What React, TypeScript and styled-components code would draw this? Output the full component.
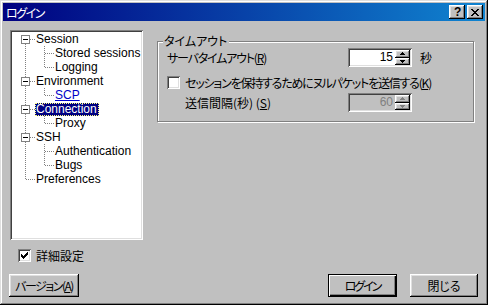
import React from "react";
import styled, { createGlobalStyle, css } from "styled-components";

const GlobalStyle = createGlobalStyle`
  html, body {
    margin: 0;
    padding: 0;
    background: #c0c0c0;
  }
  body {
    font-family: "Liberation Sans", "Noto Sans CJK JP", sans-serif;
    font-size: 12px;
    color: #000;
  }
`;

const jp = (ls = -1.2) => css`
  font-family: "Noto Sans CJK JP", "Liberation Sans", sans-serif;
  font-size: 12px;
  font-feature-settings: "palt";
  letter-spacing: ${ls}px;
`;

const raised = css`
  box-shadow: inset -1px -1px 0 #000, inset 1px 1px 0 #fff,
    inset -2px -2px 0 #808080, inset 2px 2px 0 #dfdfdf;
`;

const sunken = css`
  box-shadow: inset 1px 1px 0 #808080, inset -1px -1px 0 #fff,
    inset 2px 2px 0 #404040, inset -2px -2px 0 #dfdfdf;
`;

const Window = styled.div`
  width: 488px;
  height: 305px;
  box-sizing: border-box;
  padding: 3px;
  background: #c0c0c0;
  display: flex;
  flex-direction: column;
  box-shadow: inset -1px -1px 0 #000, inset 1px 1px 0 #dfdfdf,
    inset -2px -2px 0 #808080, inset 2px 2px 0 #fff;
`;

const TitleBar = styled.div`
  height: 18px;
  flex: none;
  display: flex;
  align-items: center;
  padding: 0 2px 0 3px;
  background: linear-gradient(to right, #000080, #1084d0);
  color: #fff;
  ${jp(-1.5)};
`;

const TitleButtons = styled.div`
  margin-left: auto;
  display: flex;
  gap: 2px;
`;

const TitleButton = styled.div`
  width: 16px;
  height: 14px;
  background: #c0c0c0;
  color: #000;
  display: flex;
  align-items: center;
  justify-content: center;
  font-family: "Liberation Sans", sans-serif;
  font-weight: bold;
  font-size: 12px;
  line-height: 14px;
  ${raised};
`;

const Content = styled.div`
  flex: 1;
  display: flex;
  flex-direction: column;
  padding: 9px 7px 5px 7px;
`;

const TopRow = styled.div`
  display: flex;
  gap: 14px;
  height: 210px;
`;

const Tree = styled.div`
  width: 133px;
  height: 210px;
  box-sizing: border-box;
  padding: 2px 2px 2px 6px;
  background: #fff;
  ${sunken};
`;

const TreeRow = styled.div`
  display: flex;
  align-items: center;
  height: 14px;
`;

const GutterSvg = styled.svg`
  flex: none;
  display: block;
`;

const NodeLabel = styled.span<{ $selected?: boolean; $hot?: boolean }>`
  height: 13px;
  line-height: 13px;
  padding: 0 2px 0 1px;
  white-space: nowrap;
  color: ${(p) => (p.$hot ? "#0000c8" : "#000")};
  text-decoration: ${(p) => (p.$hot ? "underline" : "none")};
  ${(p) =>
    p.$selected &&
    css`
      background: #000080;
      color: #fff;
      outline: 1px dotted #ffff7f;
      outline-offset: -1px;
    `}
`;

const RightPanel = styled.div`
  flex: 1;
  padding-right: 4px;
`;

const Group = styled.div`
  position: relative;
  margin-top: 11px;
  border: 1px solid #808080;
  box-shadow: 1px 1px 0 #fff, inset 1px 1px 0 #fff;
  padding: 6px 8px 9px 9px;
  display: flex;
  flex-direction: column;
`;

const Legend = styled.span`
  position: absolute;
  top: -8px;
  left: 5px;
  padding: 0 2px 0 1px;
  background: #c0c0c0;
  line-height: 14px;
  ${jp(0)};
`;

const FieldRow = styled.div<{ $indent?: number; $gap?: number }>`
  display: flex;
  align-items: center;
  height: 19px;
  margin-top: ${(p) => p.$gap ?? 0}px;
  padding-left: ${(p) => p.$indent ?? 0}px;
`;

const FieldLabel = styled.span<{ $width: number; $ls?: number }>`
  width: ${(p) => p.$width}px;
  white-space: nowrap;
  ${(p) => jp(p.$ls)};
`;

const Unit = styled.span`
  margin-left: 8px;
  ${jp(0)};
`;

const CheckRow = styled.div<{ $gap?: number; $indent?: number }>`
  display: flex;
  align-items: center;
  gap: 5px;
  height: 13px;
  margin-top: ${(p) => p.$gap ?? 0}px;
  padding-left: ${(p) => p.$indent ?? 0}px;
`;

const CheckText = styled.span<{ $ls?: number }>`
  white-space: nowrap;
  line-height: 13px;
  ${(p) => jp(p.$ls)};
`;

const CheckBox = styled.div`
  width: 13px;
  height: 13px;
  box-sizing: border-box;
  flex: none;
  background: #fff;
  display: flex;
  align-items: center;
  justify-content: center;
  ${sunken};
`;

const Spin = styled.div<{ $disabled?: boolean }>`
  width: 64px;
  height: 19px;
  box-sizing: border-box;
  padding: 2px;
  display: flex;
  background: ${(p) => (p.$disabled ? "#c0c0c0" : "#fff")};
  ${sunken};
`;

const SpinValue = styled.span<{ $disabled?: boolean }>`
  flex: 1;
  text-align: right;
  padding-right: 2px;
  line-height: 15px;
  font-size: 12px;
  color: ${(p) => (p.$disabled ? "#808080" : "#000")};
`;

const SpinButtons = styled.div`
  width: 15px;
  display: flex;
  flex-direction: column;
`;

const SpinButton = styled.div`
  flex: 1;
  background: #c0c0c0;
  display: flex;
  align-items: center;
  justify-content: center;
  ${raised};
`;

const Underline = styled.span`
  text-decoration: underline;
`;

const ButtonRow = styled.div`
  display: flex;
  align-items: center;
  margin-top: 12px;
  margin-left: -1px;
  height: 23px;
  gap: 13px;
`;

const Spacer = styled.div`
  flex: 1;
`;

const Button = styled.button<{ $width: number; $default?: boolean; $ls?: number }>`
  width: ${(p) => p.$width}px;
  height: 23px;
  padding: 0;
  border: 0;
  background: #c0c0c0;
  color: #000;
  ${(p) => jp(p.$ls)};
  ${(p) =>
    p.$default
      ? css`
          box-shadow: inset 0 0 0 1px #000, inset 2px 2px 0 #fff,
            inset -2px -2px 0 #000, inset -3px -3px 0 #808080;
        `
      : raised};
`;

type GutterProps = { up?: boolean; down?: boolean; across?: boolean; box?: boolean };

const dot = { stroke: "#808080", strokeDasharray: "1 1" };

const Gutter = ({ up, down, across, box }: GutterProps) => (
  <GutterSvg width={19} height={14} viewBox="0 0 19 14" shapeRendering="crispEdges">
    {up && <line x1={9.5} y1={0} x2={9.5} y2={7} {...dot} />}
    {down && <line x1={9.5} y1={8} x2={9.5} y2={14} {...dot} />}
    {across && <line x1={10} y1={7.5} x2={19} y2={7.5} {...dot} />}
    {box && (
      <>
        <rect x={5.5} y={3.5} width={8} height={8} fill="#fff" stroke="#808080" />
        <line x1={7} y1={7.5} x2={12} y2={7.5} stroke="#000" />
      </>
    )}
  </GutterSvg>
);

type Node = {
  label: string;
  level: 0 | 1;
  expander?: boolean;
  first?: boolean;
  last?: boolean;
  selected?: boolean;
  hot?: boolean;
};

const nodes: Node[] = [
  { label: "Session", level: 0, expander: true, first: true },
  { label: "Stored sessions", level: 1 },
  { label: "Logging", level: 1, last: true },
  { label: "Environment", level: 0, expander: true },
  { label: "SCP", level: 1, last: true, hot: true },
  { label: "Connection", level: 0, expander: true, selected: true },
  { label: "Proxy", level: 1, last: true },
  { label: "SSH", level: 0, expander: true },
  { label: "Authentication", level: 1 },
  { label: "Bugs", level: 1, last: true },
  { label: "Preferences", level: 0, last: true },
];

const Arrow = ({ down, disabled }: { down?: boolean; disabled?: boolean }) => (
  <svg width={5} height={3} viewBox="0 0 5 3" shapeRendering="crispEdges">
    <polygon
      points={down ? "0,0 5,0 2.5,3" : "2.5,0 5,3 0,3"}
      fill={disabled ? "#808080" : "#000"}
    />
  </svg>
);

const SpinEdit = ({ value, disabled }: { value: string; disabled?: boolean }) => (
  <Spin $disabled={disabled}>
    <SpinValue $disabled={disabled}>{value}</SpinValue>
    <SpinButtons>
      <SpinButton>
        <Arrow disabled={disabled} />
      </SpinButton>
      <SpinButton>
        <Arrow down disabled={disabled} />
      </SpinButton>
    </SpinButtons>
  </Spin>
);

const Check = ({ checked }: { checked?: boolean }) => (
  <CheckBox>
    {checked && (
      <svg width={7} height={7} viewBox="0 0 7 7" shapeRendering="crispEdges">
        {[2, 3, 4, 3, 2, 1, 0].map((y, x) => (
          <rect key={x} x={x} y={y} width={1} height={3} fill="#000" />
        ))}
      </svg>
    )}
  </CheckBox>
);

export default function App() {
  return (
    <>
      <GlobalStyle />
      <Window>
        <TitleBar>
          ログイン
          <TitleButtons>
            <TitleButton>?</TitleButton>
            <TitleButton>
              <svg width={8} height={7} viewBox="0 0 8 7" shapeRendering="crispEdges">
                <path d="M0 0h2v1H0zM6 0h2v1H6zM1 1h2v1H1zM5 1h2v1H5zM2 2h4v1H2zM3 3h2v1H3zM2 4h4v1H2zM1 5h2v1H1zM5 5h2v1H5zM0 6h2v1H0zM6 6h2v1H6z" fill="#000" />
              </svg>
            </TitleButton>
          </TitleButtons>
        </TitleBar>
        <Content>
          <TopRow>
            <Tree>
              {nodes.map((n) => (
                <TreeRow key={n.label}>
                  {n.level === 0 ? (
                    <Gutter up={!n.first} down={!n.last} across box={n.expander} />
                  ) : (
                    <>
                      <Gutter up down />
                      <Gutter up down={!n.last} across />
                    </>
                  )}
                  <NodeLabel $selected={n.selected} $hot={n.hot}>
                    {n.label}
                  </NodeLabel>
                </TreeRow>
              ))}
            </Tree>
            <RightPanel>
              <Group>
                <Legend>タイムアウト</Legend>
                <FieldRow>
                  <FieldLabel $width={181}>
                    サーバタイムアウト(<Underline>R</Underline>)
                  </FieldLabel>
                  <SpinEdit value="15" />
                  <Unit>秒</Unit>
                </FieldRow>
                <CheckRow $gap={9}>
                  <Check />
                  <CheckText>
                    セッションを保持するためにヌルパケットを送信する(<Underline>K</Underline>)
                  </CheckText>
                </CheckRow>
                <FieldRow $gap={4} $indent={18}>
                  <FieldLabel $width={163} $ls={0}>
                    送信間隔(秒) (<Underline>S</Underline>)
                  </FieldLabel>
                  <SpinEdit value="60" disabled />
                </FieldRow>
              </Group>
            </RightPanel>
          </TopRow>
          <CheckRow $gap={9} $indent={8}>
            <Check checked />
            <CheckText $ls={0}>詳細設定</CheckText>
          </CheckRow>
          <ButtonRow>
            <Button $width={70} $ls={-1.5}>
              バージョン(<Underline>A</Underline>)
            </Button>
            <Spacer />
            <Button $width={69} $default $ls={-2}>
              ログイン
            </Button>
            <Button $width={68} $ls={0}>
              閉じる
            </Button>
          </ButtonRow>
        </Content>
      </Window>
    </>
  );
}
